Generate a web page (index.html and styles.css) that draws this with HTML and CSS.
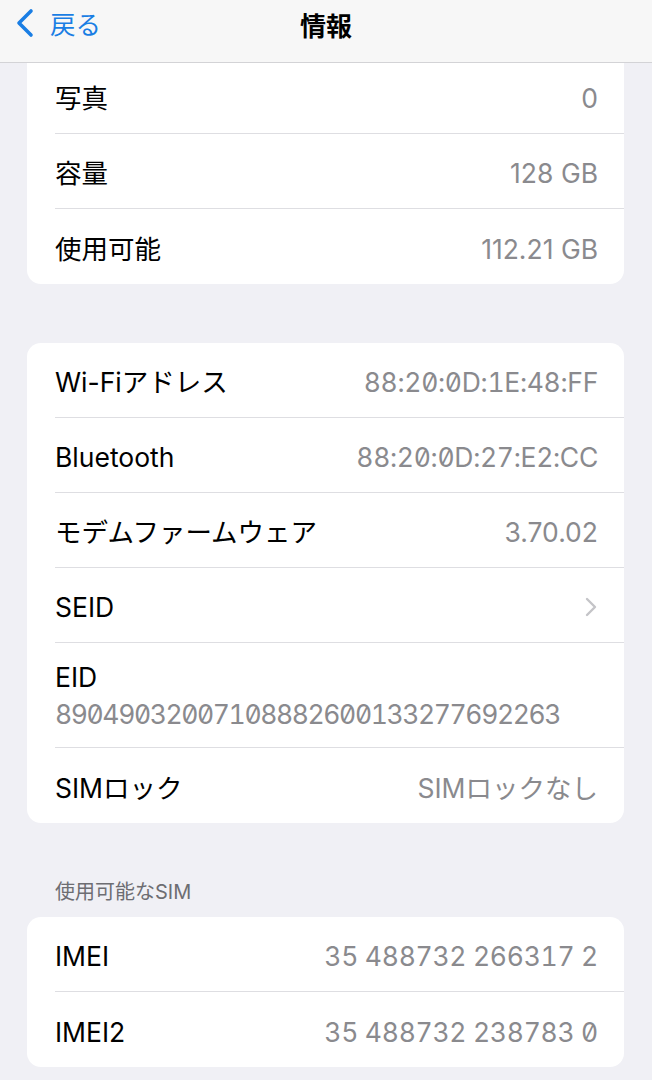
FILE: index.html
```html
<!DOCTYPE html>
<html lang="ja">
  <head>
    <meta charset="UTF-8">
    <meta name="viewport" content="width=device-width, initial-scale=1.0">
    <title>情報</title>
    <link rel="stylesheet" href="styles.css">
  </head>
  <body>

    <header class="nav-bar">
      <a class="back-link" href="#">
        <svg class="back-chevron" viewBox="0 0 22 30" width="22" height="30">
          <path d="M18 3 L6 15 L18 27" fill="none" stroke="currentColor" stroke-width="3.6" stroke-linecap="round" stroke-linejoin="round"/>
        </svg>
        <span>戻る</span>
      </a>
      <h1 class="nav-title">情報</h1>
    </header>

    <main class="content">

      <!-- Storage group (scrolled partly under the nav bar) -->
      <section class="group group-first">
        <div class="row"><div class="row-inner"><span class="label">写真</span><span class="value">0</span></div></div>
        <div class="row"><div class="row-inner"><span class="label">容量</span><span class="value">128 GB</span></div></div>
        <div class="row"><div class="row-inner"><span class="label">使用可能</span><span class="value">112.21 GB</span></div></div>
      </section>

      <!-- Network / hardware group -->
      <section class="group">
        <div class="row"><div class="row-inner"><span class="label">Wi-Fiアドレス</span><span class="value mono">88:20:0D:1E:48:FF</span></div></div>
        <div class="row"><div class="row-inner"><span class="label">Bluetooth</span><span class="value mono">88:20:0D:27:E2:CC</span></div></div>
        <div class="row"><div class="row-inner"><span class="label">モデムファームウェア</span><span class="value">3.70.02</span></div></div>
        <div class="row"><div class="row-inner">
          <span class="label">SEID</span>
          <svg class="disclosure" viewBox="0 0 14 22" width="14" height="22">
            <path d="M3 3 L11 11 L3 19" fill="none" stroke="currentColor" stroke-width="2.4" stroke-linecap="round" stroke-linejoin="round"/>
          </svg>
        </div></div>
        <div class="row row-stacked"><div class="row-inner">
          <span class="label">EID</span>
          <span class="value mono eid">89049032007108882600133277692263</span>
        </div></div>
        <div class="row"><div class="row-inner"><span class="label">SIMロック</span><span class="value">SIMロックなし</span></div></div>
      </section>

      <h2 class="group-header">使用可能なSIM</h2>
      <section class="group">
        <div class="row"><div class="row-inner"><span class="label">IMEI</span><span class="value mono">35 488732 266317 2</span></div></div>
        <div class="row"><div class="row-inner"><span class="label">IMEI2</span><span class="value mono">35 488732 238783 0</span></div></div>
      </section>

    </main>

  </body>
</html>
```

FILE: styles.css
```css
* { box-sizing: border-box; }

body {
	margin: 0;
	background-color: #F0F0F5;
	color: #000;
	font-family: 'Inter', 'Noto Sans CJK JP', sans-serif;
	font-size: 26.5px;
}

/* Navigation bar, stays on top of the scrolled list */
.nav-bar {
	position: sticky;
	top: 0;
	z-index: 2;
	display: flex;
	align-items: center;
	justify-content: center;
	height: 63px;
	background-color: #F7F7F7;
	border-bottom: 1px solid #D3D3D6;
}

.back-link {
	position: absolute;
	left: 13px;
	top: 4px;
	display: flex;
	align-items: center;
	gap: 15px;
	color: #1A7EE4;
	text-decoration: none;
	font-family: 'Noto Sans CJK JP', sans-serif;
	font-size: 25.5px;
}

.back-chevron { display: block; }

.nav-title {
	margin: 0 0 14px;
	font-family: 'Noto Sans CJK JP', sans-serif;
	font-size: 26px;
	font-weight: 700;
}

.content {
	padding: 0 28px 0 27px;
}

/* Inset grouped list */
.group {
	background-color: #FFF;
	border-radius: 14px;
	overflow: hidden;
	margin-bottom: 59px;
}

.group-first {
	margin-top: -4px;
	border-radius: 0 0 14px 14px;
}

.row {
	padding-left: 28px;
}

.row-inner {
	display: flex;
	align-items: center;
	justify-content: space-between;
	height: 75px;
	padding-top: 4px;
	padding-right: 26px;
	border-bottom: 1px solid #DEDEE2;
}

.row:last-child .row-inner { border-bottom: none; }

.row-stacked .row-inner {
	flex-direction: column;
	align-items: flex-start;
	justify-content: flex-start;
	height: 105px;
	padding-top: 18px;
}

.label { line-height: 32px; }

.value {
	color: #8A8A8E;
	line-height: 32px;
}

.row-stacked .value { margin-top: 5px; }

/* Addresses and numbers use tabular figures with a slashed zero */
.mono {
	font-feature-settings: "tnum", "zero";
	letter-spacing: -0.3px;
}

.eid { letter-spacing: -1.4px; }

.disclosure {
	color: #C4C4C8;
	display: block;
}

.group-header {
	margin: -2px 0 13px 28px;
	color: #6D6D72;
	font-size: 20px;
	font-weight: 400;
	line-height: 24px;
}
```
